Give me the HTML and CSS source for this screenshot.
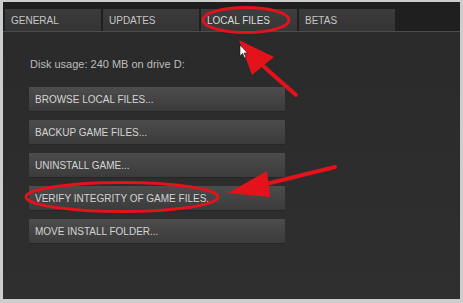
FILE: index.html
```html
<!DOCTYPE html>
<html lang="en">
<head>
  <meta charset="UTF-8" />
  <title>Game Properties - Local Files</title>
  <link rel="stylesheet" href="styles.css">
</head>
<body>

<div class="window">
  <div class="tabs">
    <div class="tab">GENERAL</div>
    <div class="tab">UPDATES</div>
    <div class="tab active">LOCAL FILES</div>
    <div class="tab">BETAS</div>
  </div>

  <div class="panel">
    <p class="disk">Disk usage: 240 MB on drive D:</p>
    <div class="actions">
      <button class="btn">BROWSE LOCAL FILES...</button>
      <button class="btn">BACKUP GAME FILES...</button>
      <button class="btn">UNINSTALL GAME...</button>
      <button class="btn">VERIFY INTEGRITY OF GAME FILES.</button>
      <button class="btn">MOVE INSTALL FOLDER...</button>
    </div>
  </div>
</div>

<!-- red markup drawn over the screenshot -->
<svg class="markup" width="463" height="303" viewBox="0 0 463 303">
  <ellipse cx="246" cy="20" rx="43" ry="12.5" fill="none" stroke="#e3121b" stroke-width="3" />
  <line x1="296" y1="95" x2="262" y2="65" stroke="#e3121b" stroke-width="4" stroke-linecap="round" />
  <polygon points="239,40 274,57 252,75" fill="#e3121b" />
  <polygon points="240,45 240,56 242.5,53.5 244.5,58 246,57.3 244,53 247.5,53" fill="#fff" stroke="#111" stroke-width="0.6" />

  <ellipse cx="122" cy="197" rx="96" ry="14.5" fill="none" stroke="#e3121b" stroke-width="3" />
  <line x1="335" y1="167" x2="266" y2="184" stroke="#e3121b" stroke-width="4" stroke-linecap="round" />
  <polygon points="228,193 267,171 270,197" fill="#e3121b" />
</svg>

</body>
</html>
```

FILE: styles.css
```css
body {
  margin: 0;
  background-color: #cdcdcd;
  font-family: 'Liberation Sans', Arial, sans-serif;
  position: relative;
  width: 463px;
  height: 303px;
  overflow: hidden;
}

.window {
  margin: 2px 3px 0 3px;
  height: 297px;
  background-color: #2b2b2b;
  display: flex;
  flex-direction: column;
}

/* Tab strip */
.tabs {
  display: flex;
  gap: 2px;
  padding: 7px 0 0 2px;
  background-color: #1f1f1f;
  border-bottom: 1px solid #4c4c4c;
}

.tab {
  width: 96px;
  height: 22px;
  box-sizing: border-box;
  padding-left: 6px;
  display: flex;
  align-items: center;
  font-size: 10px;
  color: #c6c6c6;
  background: linear-gradient(#3b3b3b, #343434);
}

.tab.active {
  background: linear-gradient(#3e3e3e, #373737);
  color: #dcdcdc;
}

/* Local files panel */
.panel {
  flex: 1;
  padding: 26px 0 0 26px;
  background: linear-gradient(#2a2a2a, #2f2f2f);
}

.disk {
  margin: 0 0 16px 1px;
  font-size: 11px;
  line-height: 13px;
  color: #bdbdbd;
}

.actions {
  display: flex;
  flex-direction: column;
  gap: 9px;
}

.btn {
  width: 256px;
  height: 24px;
  padding: 0 0 0 6px;
  border: none;
  border-radius: 1px;
  text-align: left;
  font-family: inherit;
  font-size: 10px;
  color: #d4d4d4;
  background: linear-gradient(#4c4c4c, #3b3b3b);
  box-shadow: 0 1px 0 #262626;
}

.markup {
  position: absolute;
  left: 0;
  top: 0;
  pointer-events: none;
}
```
